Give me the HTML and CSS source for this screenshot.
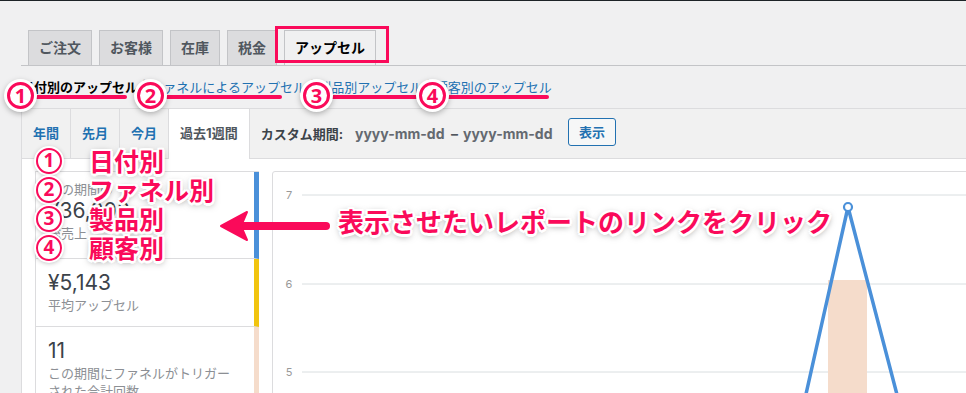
FILE: index.html
```html
<!DOCTYPE html>
<html lang="ja">
<head>
<meta charset="utf-8">
<title>アップセル レポート</title>
<link rel="stylesheet" href="styles.css">
</head>
<body>
<div class="topbar"></div>
<div class="wrap">
  <nav class="nav-tabs">
    <a class="nav-tab">ご注文</a>
    <a class="nav-tab">お客様</a>
    <a class="nav-tab">在庫</a>
    <a class="nav-tab">税金</a>
    <a class="nav-tab active">アップセル</a>
  </nav>
  <ul class="subsubsub">
    <li><a class="current">日付別のアップセル</a><span class="sep">|</span></li>
    <li><a>ファネルによるアップセル</a><span class="sep">|</span></li>
    <li><a>製品別アップセル</a><span class="sep">|</span></li>
    <li><a>顧客別のアップセル</a></li>
  </ul>
  <div class="postbox">
    <div class="range-bar">
      <a class="range">年間</a>
      <a class="range">先月</a>
      <a class="range">今月</a>
      <a class="range active">過去1週間</a>
      <div class="custom">
        <span class="custom-label">カスタム期間:</span>
        <span class="date">yyyy-mm-dd</span>
        <span class="dash">–</span>
        <span class="date">yyyy-mm-dd</span>
        <button class="btn">表示</button>
      </div>
    </div>
    <div class="report">
      <ul class="legend">
        <li class="blue">
          <span class="pre">この期間の</span>
          <strong class="value">¥36,000</strong>
          <span class="label">総売上</span>
        </li>
        <li class="yellow">
          <strong class="value">¥5,143</strong>
          <span class="label">平均アップセル</span>
        </li>
        <li class="peach">
          <strong class="value">11</strong>
          <span class="label">この期間にファネルがトリガーされた合計回数</span>
        </li>
      </ul>
      <div class="chart">
        <svg class="chart-svg" width="720" height="240" viewBox="0 0 720 240">
          <g class="grid">
            <line x1="29" y1="23" x2="720" y2="23"/>
            <line x1="29" y1="112" x2="720" y2="112"/>
            <line x1="29" y1="200" x2="720" y2="200"/>
          </g>
          <g class="ylabels">
            <text x="16" y="27">7</text>
            <text x="16" y="116">6</text>
            <text x="16" y="204">5</text>
          </g>
          <rect x="555" y="108" width="39" height="140" fill="#f5dccb"/>
          <polyline points="520,280 575,35 639,280" fill="none" stroke="#4a90d9" stroke-width="3.5" stroke-linejoin="round"/>
          <circle cx="575" cy="35" r="4" fill="#fff" stroke="#4a90d9" stroke-width="2.2"/>
        </svg>
      </div>
    </div>
  </div>
</div>

<!-- annotations -->
<div class="hl-rect"></div>

<div class="uline u1"></div>
<div class="uline u2"></div>
<div class="uline u3"></div>
<div class="uline u4"></div>

<div class="badge b1">1</div>
<div class="badge b2">2</div>
<div class="badge b3">3</div>
<div class="badge b4">4</div>

<div class="notes">
  <div class="note"><span class="badge small">1</span><span class="note-text">日付別</span></div>
  <div class="note"><span class="badge small">2</span><span class="note-text">ファネル別</span></div>
  <div class="note"><span class="badge small">3</span><span class="note-text">製品別</span></div>
  <div class="note"><span class="badge small">4</span><span class="note-text">顧客別</span></div>
</div>

<svg class="arrow" width="120" height="40" viewBox="0 0 120 40">
  <line x1="25" y1="21" x2="111" y2="21" stroke="#fa0a5a" stroke-width="8" stroke-linecap="round"/>
  <polygon points="6,21 32,7 26,21 32,35" fill="#fa0a5a" stroke="#fa0a5a" stroke-width="2" stroke-linejoin="round"/>
</svg>
<div class="callout">表示させたいレポートのリンクをクリック</div>
</body>
</html>
```

FILE: styles.css
```css
* { box-sizing: border-box; }

html, body {
  margin: 0;
  padding: 0;
}

body {
  width: 966px;
  height: 393px;
  overflow: hidden;
  position: relative;
  background: #f0f0f1;
  font-family: Inter, "Noto Sans CJK JP", sans-serif;
  color: #3c434a;
  font-size: 13px;
}

.topbar {
  height: 1px;
  background: #1d2327;
}

.wrap {
  padding: 29px 0 0 21px;
}

/* main tabs */
.nav-tabs {
  display: flex;
  align-items: flex-end;
  border-bottom: 1px solid #c3c4c7;
  height: 36px;
}

.nav-tab {
  margin-left: 7px;
  padding: 5px 10px;
  border: 1px solid #c3c4c7;
  border-bottom: none;
  background: #dcdcde;
  color: #50575e;
  font-size: 14px;
  font-weight: 700;
  line-height: 24px;
  height: 35px;
  white-space: nowrap;
}

.nav-tab.active {
  background: #f0f0f1;
  color: #000;
}

/* sub links */
.subsubsub {
  list-style: none;
  margin: 8px 0 0;
  padding: 0;
  display: flex;
  font-size: 13px;
  line-height: 26px;
  color: #646970;
}

.subsubsub li {
  white-space: nowrap;
}

.subsubsub a {
  color: #2271b1;
}

.subsubsub a.current {
  color: #000;
  font-weight: 700;
}

.sep {
  padding: 0 4px;
  color: #a7aaad;
}

/* postbox */
.postbox {
  margin-top: 8px;
  width: 980px;
  border-top: 1px solid #dcdcde;
  border-left: 1px solid #dcdcde;
  background: #fff;
}

.range-bar {
  display: flex;
  background: #f1f1f1;
  border-bottom: 1px solid #dcdcde;
  height: 50px;
}

.range {
  padding: 0 11px;
  height: 49px;
  line-height: 48px;
  border-right: 1px solid #dcdcde;
  color: #2271b1;
  font-weight: 700;
  font-size: 13px;
  white-space: nowrap;
}

.range.active {
  background: #fff;
  color: #50575e;
  height: 50px;
  margin-bottom: -1px;
  position: relative;
}

.custom {
  display: flex;
  align-items: center;
  padding-left: 11px;
  height: 49px;
  white-space: nowrap;
}

.custom-label {
  font-weight: 700;
  color: #3c434a;
  font-size: 13px;
}

.date {
  margin-left: 12px;
  font-size: 14px;
  font-weight: 700;
  color: #646970;
  width: 88px;
}

.dash + .date {
  margin-left: 0;
}

.dash {
  margin: 0 5px 0 8px;
  font-size: 14px;
  font-weight: 700;
  color: #50575e;
}

.btn {
  margin-left: 17px;
  margin-top: -3px;
  height: 28px;
  padding: 0 10px;
  border: 1px solid #2271b1;
  border-radius: 3px;
  background: #f6f7f7;
  color: #2271b1;
  font-family: inherit;
  font-size: 13px;
  font-weight: 700;
  line-height: 26px;
}

/* report */
.report {
  display: flex;
  align-items: flex-start;
  padding: 12px 0 0 13px;
  height: 260px;
}

.legend {
  list-style: none;
  margin: 0;
  padding: 0;
  width: 224px;
  border-top: 1px solid #dcdcde;
  border-left: 1px solid #dcdcde;
  flex: none;
}

.legend li {
  display: flex;
  flex-direction: column;
  padding: 11px 12px 12px;
  border-bottom: 1px solid #dcdcde;
  border-right: 5px solid #4a90d9;
}

.legend li.blue {
  padding-top: 8px;
  padding-bottom: 16px;
}

.legend li.yellow { border-right-color: #f1c40f; }
.legend li.peach { border-right-color: #f5dccb; }

.value {
  font-size: 21px;
  line-height: 26px;
  font-weight: 400;
  color: #3c434a;
}

.label, .pre {
  font-size: 13px;
  line-height: 18px;
  color: #8c8f94;
}

.chart {
  margin-left: 13px;
  width: 720px;
  height: 260px;
  border: 1px solid #dcdcde;
  border-radius: 3px;
  background: #fff;
  flex: none;
}

.chart-svg {
  display: block;
}

.grid line {
  stroke: #d9dee0;
  stroke-width: 1;
}

.ylabels text {
  font-family: Inter, sans-serif;
  font-size: 11px;
  fill: #999;
  text-anchor: middle;
}

/* annotations */
.hl-rect {
  position: absolute;
  left: 275px;
  top: 26px;
  width: 114px;
  height: 37px;
  border: 3px solid #fa0a5a;
}

.uline {
  position: absolute;
  top: 95px;
  height: 4px;
  border-radius: 2px;
  background: #fa0a5a;
}

.u1 { left: 34px; width: 93px; }
.u2 { left: 165px; width: 117px; }
.u3 { left: 330px; width: 90px; }
.u4 { left: 446px; width: 103px; }

.badge {
  position: absolute;
  top: 82px;
  width: 27px;
  height: 27px;
  border: 3px solid #fa0a5a;
  border-radius: 50%;
  background: #fff;
  color: #fa0a5a;
  font-family: "Noto Sans", sans-serif;
  font-weight: 700;
  font-size: 20px;
  line-height: 21px;
  text-align: center;
  box-shadow: 0 0 0 3px #fff, 0 2px 6px 2px rgba(0, 0, 0, 0.35);
}

.b1 { left: 7px; }
.b2 { left: 137px; }
.b3 { left: 303px; }
.b4 { left: 419px; }

.notes {
  position: absolute;
  left: 35px;
  top: 146px;
}

.note {
  display: flex;
  align-items: center;
  height: 29px;
}

.badge.small {
  position: static;
  width: 26px;
  height: 26px;
  margin-left: 1px;
  border-width: 2.5px;
  font-size: 19px;
  line-height: 21px;
  box-shadow: 0 0 0 2px #fff, 0 1px 5px 1px rgba(0, 0, 0, 0.3);
  flex: none;
}

.note-text,
.callout {
  font-family: "Noto Sans CJK JP", sans-serif;
  font-weight: 700;
  color: #fa0a5a;
  text-shadow:
    2.5px 0 #fff, -2.5px 0 #fff, 0 2.5px #fff, 0 -2.5px #fff,
    1.8px 1.8px #fff, -1.8px -1.8px #fff, 1.8px -1.8px #fff, -1.8px 1.8px #fff,
    0 2px 7px rgba(0, 0, 0, 0.55);
  white-space: nowrap;
}

.note-text {
  margin-left: 27px;
  font-size: 25px;
  line-height: 29px;
}

.arrow {
  position: absolute;
  left: 215px;
  top: 205px;
}

.callout {
  position: absolute;
  left: 338px;
  top: 205px;
  font-size: 26px;
  line-height: 32px;
}
```
